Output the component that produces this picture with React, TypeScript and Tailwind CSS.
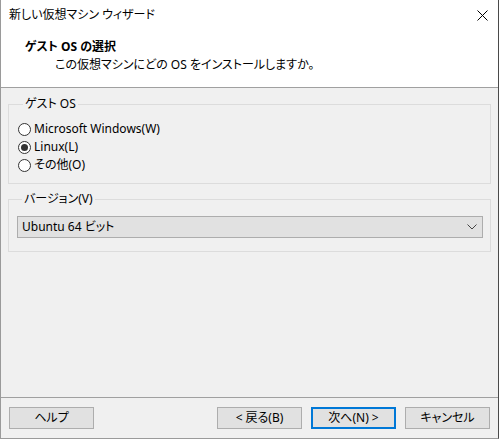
import React from 'react';

const font = "font-['Noto_Sans','Noto_Sans_CJK_JP',sans-serif] [font-feature-settings:'palt']";

const Radio = ({ label, checked }: { label: string; checked?: boolean }) => (
  <label className="flex h-[18px] items-center gap-[3px]">
    <span className="flex h-[13px] w-[13px] items-center justify-center rounded-full border border-[#333333] bg-white">
      {checked && <span className="h-[7px] w-[7px] rounded-full bg-[#333333]" />}
    </span>
    <span>{label}</span>
  </label>
);

const Button = ({ label, primary }: { label: string; primary?: boolean }) => (
  <button
    className={`h-[22px] w-[85px] text-[12px] text-black ${
      primary ? 'border-2 border-[#0078d7] bg-[#e1e1e1]' : 'border border-[#adadad] bg-[#e1e1e1]'
    }`}
  >
    {label}
  </button>
);

export default function App() {
  return (
    <div className={`flex h-[439px] w-[499px] flex-col border-r border-l border-b border-l-[#9a9a9a] border-r-[#4a4a4a] border-b-[#9a9a9a] bg-[#f0f0f0] text-[12px] text-black ${font}`}>
      {/* title bar */}
      <div className="flex h-[30px] items-center justify-between bg-white pl-[8px] pr-[10px]">
        <span>新しい仮想マシン ウィザード</span>
        <svg width="11" height="11" viewBox="0 0 11 11" className="text-black">
          <path d="M0.5 0.5 L10.5 10.5 M10.5 0.5 L0.5 10.5" stroke="currentColor" strokeWidth="1" fill="none" />
        </svg>
      </div>

      {/* header */}
      <div className="flex h-[58px] flex-col border-b border-[#a0a0a0] bg-white pt-[8px]">
        <div className="pl-[24px] font-bold leading-[18px]">ゲスト OS の選択</div>
        <div className="pl-[54px] leading-[18px]">この仮想マシンにどの OS をインストールしますか。</div>
      </div>

      {/* body */}
      <div className="flex flex-1 flex-col px-[7px] pt-[8px]">
        <fieldset className="border border-[#dcdcdc] pt-[8px] pr-[8px] pb-[9px] pl-[9px]">
          <legend className="ml-[5px] px-[2px] leading-[16px]">ゲスト OS</legend>
          <Radio label="Microsoft Windows(W)" />
          <Radio label="Linux(L)" checked />
          <Radio label="その他(O)" />
        </fieldset>

        <fieldset className="mt-[7px] border border-[#dcdcdc] pt-[9px] pr-[7px] pb-[13px] pl-[8px]">
          <legend className="ml-[5px] px-[2px] leading-[16px]">バージョン(V)</legend>
          <div className="flex h-[22px] items-center justify-between border border-[#adadad] bg-[#e1e1e1] pl-[4px] pr-[5px]">
            <span>Ubuntu 64 ビット</span>
            <svg width="10" height="6" viewBox="0 0 10 6">
              <path d="M0.5 0.5 L5 5 L9.5 0.5" stroke="#444444" strokeWidth="1" fill="none" />
            </svg>
          </div>
        </fieldset>
      </div>

      {/* footer */}
      <div className="flex h-[41px] items-start border-t border-[#a0a0a0] px-[8px] pt-[9px]">
        <Button label="ヘルプ" />
        <div className="ml-auto flex gap-[9px]">
          <Button label="< 戻る(B)" />
          <Button label="次へ(N) >" primary />
          <Button label="キャンセル" />
        </div>
      </div>
    </div>
  );
}
